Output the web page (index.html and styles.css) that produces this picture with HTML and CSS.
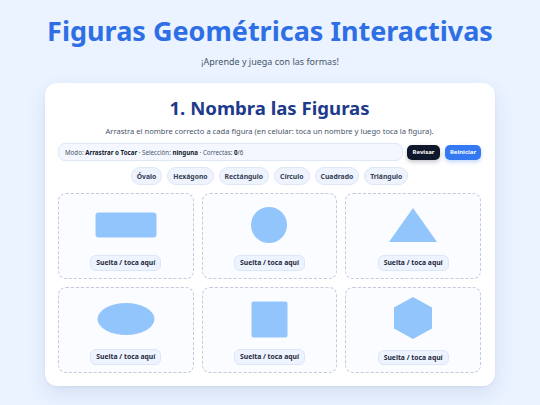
FILE: index.html
```html
<!DOCTYPE html>
<html lang="es">
<head>
<meta charset="utf-8">
<title>Figuras Geométricas Interactivas</title>
<link rel="stylesheet" href="styles.css">
</head>
<body>
<header class="top">
  <h1 class="title">Figuras Geométricas Interactivas</h1>
  <p class="subtitle">¡Aprende y juega con las formas!</p>
</header>
<main class="card">
  <h2 class="heading">1. Nombra las Figuras</h2>
  <p class="desc">Arrastra el nombre correcto a cada figura (en celular: toca un nombre y luego toca la figura).</p>
  <div class="statusrow">
    <div class="status">Modo: <b>Arrastrar o Tocar</b> · Selección: <b>ninguna</b> · Correctas: <b>0</b>/6</div>
    <button class="btn btn-dark">Revisar</button>
    <button class="btn btn-blue">Reiniciar</button>
  </div>
  <div class="chips">
    <span class="chip">Óvalo</span>
    <span class="chip">Hexágono</span>
    <span class="chip">Rectángulo</span>
    <span class="chip">Círculo</span>
    <span class="chip">Cuadrado</span>
    <span class="chip">Triángulo</span>
  </div>
  <div class="grid">
    <div class="cell">
      <div class="shape"><svg width="62" height="26" viewBox="0 0 62 26"><rect x="0.5" y="0.5" width="61" height="25" rx="3" fill="#93c5fd"/></svg></div>
      <span class="drop">Suelta / toca aquí</span>
    </div>
    <div class="cell">
      <div class="shape"><svg width="38" height="38" viewBox="0 0 38 38"><circle cx="19" cy="19" r="18" fill="#93c5fd"/></svg></div>
      <span class="drop">Suelta / toca aquí</span>
    </div>
    <div class="cell">
      <div class="shape"><svg width="50" height="36" viewBox="0 0 50 36"><polygon points="25,1 49,35 1,35" fill="#93c5fd"/></svg></div>
      <span class="drop">Suelta / toca aquí</span>
    </div>
    <div class="cell">
      <div class="shape"><svg width="58" height="34" viewBox="0 0 58 34"><ellipse cx="29" cy="17" rx="28.5" ry="16" fill="#93c5fd"/></svg></div>
      <span class="drop">Suelta / toca aquí</span>
    </div>
    <div class="cell">
      <div class="shape"><svg width="37" height="37" viewBox="0 0 37 37"><rect x="0.5" y="0.5" width="36" height="36" rx="2" fill="#93c5fd"/></svg></div>
      <span class="drop">Suelta / toca aquí</span>
    </div>
    <div class="cell">
      <div class="shape shape-hex"><svg width="40" height="44" viewBox="0 0 40 44"><polygon points="20,1 39,11.5 39,32.5 20,43 1,32.5 1,11.5" fill="#93c5fd"/></svg></div>
      <span class="drop">Suelta / toca aquí</span>
    </div>
  </div>
</main>
</body>
</html>
```

FILE: styles.css
```css
* { box-sizing: border-box; }
html, body { margin: 0; padding: 0; }
body {
  width: 540px;
  height: 405px;
  overflow: hidden;
  background: #eaf3ff;
  font-family: "Noto Sans", "Open Sans", sans-serif;
  color: #334155;
}
.top {
  text-align: center;
  padding-top: 13px;
}
.title {
  margin: 0;
  font-size: 27px;
  line-height: 36px;
  font-weight: 700;
  color: #2f6fe6;
}
.subtitle {
  margin: 6px 0 0;
  font-size: 9px;
  line-height: 13px;
  color: #475569;
}
.card {
  margin: 15px 45px 0;
  background: #ffffff;
  border-radius: 12px;
  box-shadow: 0 8px 20px rgba(30, 58, 138, 0.10), 0 1px 3px rgba(30, 58, 138, 0.06);
  padding: 12px 14px 14px 13px;
  height: 303px;
}
.heading {
  margin: 0;
  text-align: center;
  font-size: 18.6px;
  line-height: 26px;
  font-weight: 700;
  color: #1e3a8a;
}
.desc {
  margin: 4px 0 0;
  text-align: center;
  font-size: 7.6px;
  line-height: 12px;
  color: #475569;
}
.statusrow {
  margin-top: 6px;
  display: flex;
  align-items: center;
  gap: 4px;
}
.status {
  flex: 1;
  height: 18px;
  display: flex;
  align-items: center;
  white-space: pre;
  padding: 0 6px;
  background: #f4f7ff;
  border: 1px solid #e1e8f5;
  border-radius: 7px;
  font-size: 6.2px;
  color: #475569;
}
.status b { color: #0f172a; font-weight: 700; }
.btn {
  height: 15px;
  border: none;
  border-radius: 5px;
  padding: 0;
  font-family: inherit;
  font-size: 6px;
  font-weight: 700;
  color: #ffffff;
}
.btn-dark {
  width: 33px;
  background: #0f172a;
  box-shadow: 0 2px 4px rgba(15, 23, 42, 0.25);
}
.btn-blue {
  width: 36px;
  margin-left: 1px;
  background: #3478f2;
  box-shadow: 0 2px 4px rgba(52, 120, 242, 0.3);
}
.chips {
  margin-top: 6px;
  display: flex;
  justify-content: center;
  gap: 5px;
}
.chip {
  height: 18px;
  display: inline-flex;
  align-items: center;
  padding: 0 5px;
  background: #eef3fd;
  border: 1px solid #dfe7f6;
  border-radius: 9px;
  font-size: 6.8px;
  font-weight: 700;
  color: #334155;
}
.grid {
  margin-top: 8px;
  display: grid;
  grid-template-columns: repeat(3, 1fr);
  gap: 8px;
}
.cell {
  height: 86px;
  display: flex;
  flex-direction: column;
  align-items: center;
  padding: 10px 0 7px;
  background: #fbfcff;
  border: 1px dashed #c3cad8;
  border-radius: 8px;
}
.shape {
  height: 44px;
  display: flex;
  align-items: center;
  justify-content: center;
}
.shape svg { display: block; }
.shape-hex { margin-top: -2px; margin-bottom: 2px; }
.drop {
  margin-top: 8px;
  height: 17px;
  display: inline-flex;
  align-items: center;
  padding: 0 5px;
  background: #eef4ff;
  border: 1px solid #dde6f6;
  border-radius: 6px;
  font-size: 6.8px;
  font-weight: 700;
  color: #1e293b;
}
```
